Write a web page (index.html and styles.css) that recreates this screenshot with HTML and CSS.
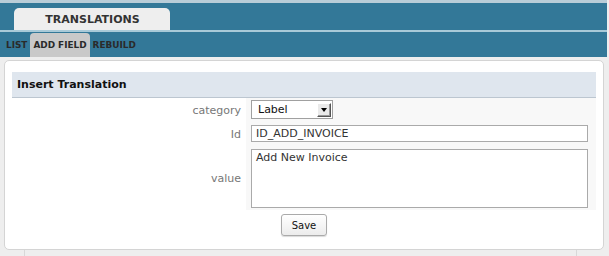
FILE: index.html
```html
<!DOCTYPE html>
<html>
<head>
<meta charset="utf-8">
<link rel="stylesheet" href="styles.css">
</head>
<body>
<div class="page">
  <div class="topline"></div>
  <div class="bar1">
    <div class="maintab">TRANSLATIONS</div>
  </div>
  <div class="sep"></div>
  <div class="bar2">
    <span class="subtab">LIST</span>
    <span class="subtab active">ADD FIELD</span>
    <span class="subtab">REBUILD</span>
  </div>
  <div class="panel">
    <div class="phead">Insert Translation</div>
    <div class="form">
      <div class="lbl r1">category</div>
      <div class="fld r1">
        <div class="select"><span class="selval">Label</span><span class="arrow"><span class="tri"></span></span></div>
      </div>
      <div class="lbl r2">Id</div>
      <div class="fld r2"><input class="text" type="text" value="ID_ADD_INVOICE"></div>
      <div class="lbl r3">value</div>
      <div class="fld r3"><textarea class="area">Add New Invoice</textarea></div>
    </div>
    <div class="actions"><button class="btn">Save</button></div>
  </div>
  <div class="below"></div>
</div>
</body>
</html>
```

FILE: styles.css
```css
html, body {
  margin: 0;
  padding: 0;
  background: #eeeeee;
  font-family: "DejaVu Sans", Verdana, sans-serif;
}
.page {
  width: 607px;
  height: 256px;
  overflow: hidden;
}
.topline {
  height: 3px;
  background: #b9cdd8;
}
.bar1 {
  height: 27px;
  background: #337898;
  padding-left: 14px;
  display: flex;
  align-items: flex-end;
}
.maintab {
  width: 155px;
  height: 22px;
  background: #eeeeee;
  border-radius: 5px 5px 0 0;
  font-size: 11px;
  font-weight: bold;
  color: #333;
  display: flex;
  align-items: center;
  justify-content: center;
  padding-left: 1px;
}
.sep {
  height: 2px;
  background: #a9cad8;
}
.bar2 {
  height: 25px;
  background: #337898;
  display: flex;
  align-items: flex-end;
  padding-left: 3px;
}
.subtab {
  height: 24px;
  display: flex;
  align-items: center;
  padding: 0 3px;
  font-size: 8.9px;
  font-weight: bold;
  color: #2a2a2a;
}
.subtab.active {
  background: #c9c9c9;
  border-radius: 4px 4px 0 0;
}
.panel {
  margin: 3px 0 0 4px;
  width: 600px;
  height: 190px;
  box-sizing: border-box;
  background: #fff;
  border: 1px solid #d4d4d4;
  border-radius: 5px;
  padding: 11px 7px 0 7px;
}
.phead {
  height: 25px;
  background: #dfe6ee;
  border-bottom: 1px solid #bcc6d0;
  font-size: 11px;
  font-weight: bold;
  color: #111;
  display: flex;
  align-items: center;
  padding-left: 5px;
}
.form {
  display: grid;
  grid-template-columns: 234px 350px;
}
.lbl {
  font-size: 11px;
  color: #777;
  text-align: right;
  padding-right: 5px;
  display: flex;
  align-items: center;
  justify-content: flex-end;
}
.fld {
  background: #f8f8f8;
  padding-left: 5px;
}
.fld.r1 { padding-top: 2px; padding-bottom: 3px; }
.fld.r2 { padding-top: 3px; padding-bottom: 4px; }
.fld.r3 { padding-top: 3px; padding-bottom: 2px; }
.select {
  width: 82px;
  height: 19px;
  box-sizing: border-box;
  border: 1px solid #a0a0a0;
  background: #fff;
  display: flex;
  align-items: center;
  justify-content: space-between;
  padding: 1px 1px 1px 6px;
}
.selval {
  font-size: 11px;
  color: #111;
}
.arrow {
  width: 14px;
  height: 14px;
  box-sizing: border-box;
  background: #eaeaea;
  border-top: 1px solid #fff;
  border-left: 1px solid #fff;
  border-right: 1px solid #555;
  border-bottom: 1px solid #555;
  box-shadow: inset -1px -1px 0 #999;
  display: flex;
  align-items: center;
  justify-content: center;
}
.tri {
  width: 0;
  height: 0;
  border-left: 3px solid transparent;
  border-right: 3px solid transparent;
  border-top: 4px solid #000;
  margin-top: 1px;
}
.text {
  display: block;
  width: 337px;
  height: 17px;
  box-sizing: border-box;
  margin: 0;
  border: 1px solid #aaa;
  padding: 0 4px;
  font-family: "DejaVu Sans", Verdana, sans-serif;
  font-size: 11px;
  color: #333;
  background: #fff;
}
.area {
  display: block;
  width: 337px;
  height: 59px;
  box-sizing: border-box;
  margin: 0;
  border: 1px solid #aaa;
  padding: 1px 4px;
  font-family: "DejaVu Sans", Verdana, sans-serif;
  font-size: 11px;
  color: #333;
  background: #fff;
  resize: none;
}
.actions {
  display: flex;
  justify-content: center;
  padding-top: 4px;
}
.btn {
  width: 46px;
  height: 22px;
  box-sizing: border-box;
  border: 1px solid #aaa;
  border-radius: 3px;
  background: linear-gradient(#ffffff, #ececec);
  box-shadow: 0 1px 1px rgba(0,0,0,0.15);
  font-family: "DejaVu Sans", Verdana, sans-serif;
  font-size: 10px;
  color: #111;
  padding: 0;
}
.below {
  margin-left: 24px;
  width: 551px;
  height: 10px;
  border-left: 1px solid #d8d8d8;
  border-right: 1px solid #d8d8d8;
}
```
